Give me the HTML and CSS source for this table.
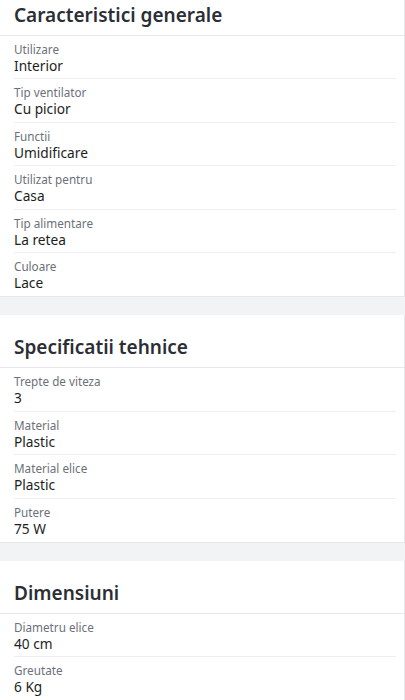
FILE: index.html
```html
<!DOCTYPE html>
<html lang="ro">
<head>
<meta charset="utf-8">
<link rel="stylesheet" href="styles.css">
</head>
<body>
<main class="page">
  <section class="card">
    <h2 class="card-title">Caracteristici generale</h2>
    <div class="row"><div class="label">Utilizare</div><div class="value">Interior</div></div>
    <div class="row"><div class="label">Tip ventilator</div><div class="value">Cu picior</div></div>
    <div class="row"><div class="label">Functii</div><div class="value">Umidificare</div></div>
    <div class="row"><div class="label">Utilizat pentru</div><div class="value">Casa</div></div>
    <div class="row"><div class="label">Tip alimentare</div><div class="value">La retea</div></div>
    <div class="row"><div class="label">Culoare</div><div class="value">Lace</div></div>
  </section>
  <section class="card">
    <h2 class="card-title">Specificatii tehnice</h2>
    <div class="row"><div class="label">Trepte de viteza</div><div class="value">3</div></div>
    <div class="row"><div class="label">Material</div><div class="value">Plastic</div></div>
    <div class="row"><div class="label">Material elice</div><div class="value">Plastic</div></div>
    <div class="row"><div class="label">Putere</div><div class="value">75 W</div></div>
  </section>
  <section class="card">
    <h2 class="card-title">Dimensiuni</h2>
    <div class="row"><div class="label">Diametru elice</div><div class="value">40 cm</div></div>
    <div class="row"><div class="label">Greutate</div><div class="value">6 Kg</div></div>
  </section>
</main>
</body>
</html>
```

FILE: styles.css
```css
html, body {
  margin: 0;
  padding: 0;
  background: #f2f3f5;
}
body {
  font-family: "Noto Sans", "Open Sans", sans-serif;
  overflow: hidden;
}
.page {
  display: flex;
  flex-direction: column;
  gap: 18px;
  margin-top: -17px;
}
.card {
  background: #ffffff;
  border-bottom: 1px solid #e6e8eb;
  border-right: 1px solid #e4e6e9;
}
.card-title {
  margin: 0;
  height: 53px;
  box-sizing: border-box;
  padding: 20px 14px 0;
  font-size: 19px;
  line-height: 24px;
  font-weight: 600;
  color: #2b2f35;
  border-bottom: 1px solid #e6e8eb;
}
.row {
  margin: 0 8px 0 14px;
  padding: 5px 0 3.4px;
  border-bottom: 1px solid #eceef1;
}
.row:last-child {
  border-bottom: none;
  padding-bottom: 4.4px;
}
.label {
  font-size: 11.7px;
  line-height: 16px;
  color: #6b7079;
}
.value {
  font-size: 13.7px;
  line-height: 18px;
  color: #1b1e22;
}
```
